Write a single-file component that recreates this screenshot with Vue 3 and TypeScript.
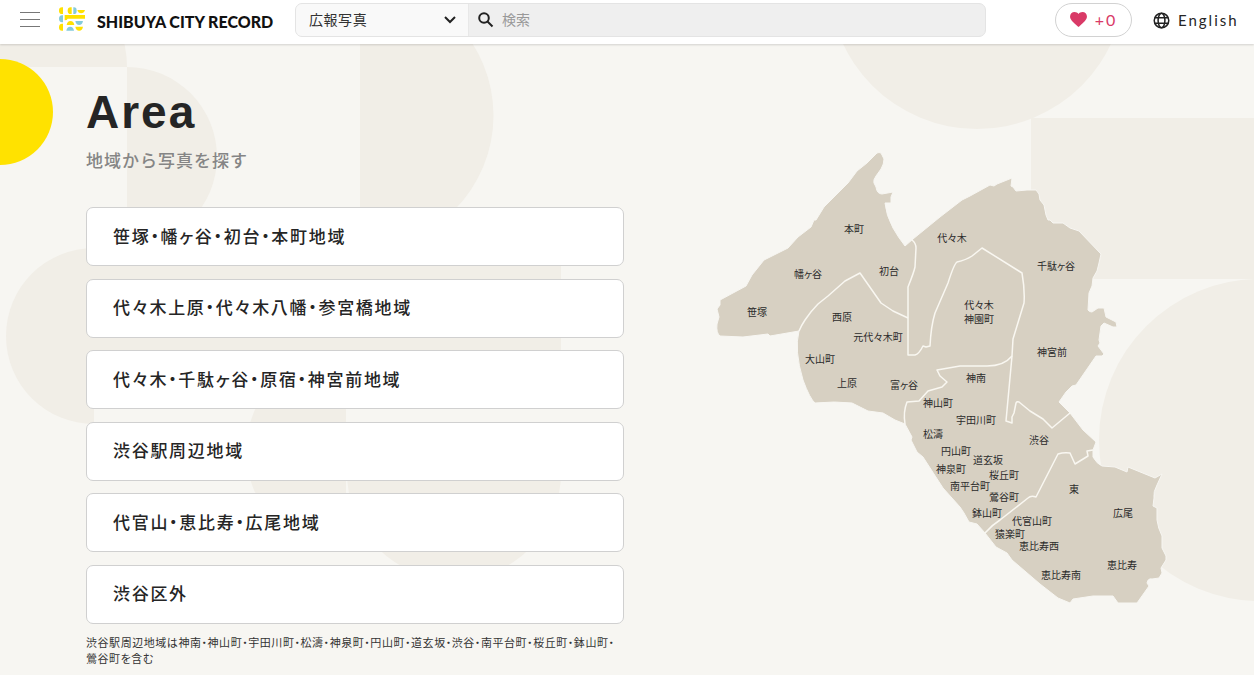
<script setup lang="ts">
import { ref } from 'vue'

interface MapLabel {
  text: string
  x: number
  y: number
}

const category = ref('広報写真')
const keyword = ref('')
const favorites = ref(0)

const areas: string[] = [
  '笹塚・幡ヶ谷・初台・本町地域',
  '代々木上原・代々木八幡・参宮橋地域',
  '代々木・千駄ヶ谷・原宿・神宮前地域',
  '渋谷駅周辺地域',
  '代官山・恵比寿・広尾地域',
  '渋谷区外',
]

const labels: MapLabel[] = [
  { text: '本町', x: 854, y: 229 },
  { text: '代々木', x: 952, y: 238 },
  { text: '千駄ヶ谷', x: 1056, y: 266 },
  { text: '初台', x: 889, y: 271 },
  { text: '幡ヶ谷', x: 808, y: 274 },
  { text: '笹塚', x: 757, y: 312 },
  { text: '西原', x: 842, y: 317 },
  { text: '元代々木町', x: 878, y: 337 },
  { text: '代々木', x: 979, y: 305 },
  { text: '神園町', x: 979, y: 319 },
  { text: '神宮前', x: 1052, y: 352 },
  { text: '大山町', x: 820, y: 359 },
  { text: '上原', x: 847, y: 383 },
  { text: '富ヶ谷', x: 904, y: 385 },
  { text: '神南', x: 976, y: 378 },
  { text: '神山町', x: 938, y: 403 },
  { text: '宇田川町', x: 976, y: 420 },
  { text: '松濤', x: 933, y: 434 },
  { text: '渋谷', x: 1039, y: 440 },
  { text: '円山町', x: 956, y: 451 },
  { text: '道玄坂', x: 988, y: 460 },
  { text: '神泉町', x: 951, y: 469 },
  { text: '桜丘町', x: 1004, y: 475 },
  { text: '南平台町', x: 970, y: 486 },
  { text: '東', x: 1074, y: 489 },
  { text: '鶯谷町', x: 1004, y: 497 },
  { text: '鉢山町', x: 987, y: 513 },
  { text: '広尾', x: 1123, y: 513 },
  { text: '代官山町', x: 1032, y: 521 },
  { text: '猿楽町', x: 1010, y: 534 },
  { text: '恵比寿西', x: 1039, y: 546 },
  { text: '恵比寿', x: 1122, y: 565 },
  { text: '恵比寿南', x: 1061, y: 575 },
]

const outline =
  'M877 153Q879 152 881 153L884 159Q884 164 881 169L876 176Q873 180 874 183L876 187Q877 194 882 194L893 192L891 197V203L885 203Q886 215 893 228Q898 237 905 246L913 239L940 217L962 200L970 196L990 185L994 186L997 184L1012 178L1011 186L1013 187L1016 191L1027 190H1036L1039 194L1040 200L1044 205L1046 215L1048 220H1050L1053 223H1063L1070 228L1079 231L1101 254L1099 263L1097 271L1093 278L1092 286L1089 293L1088 310Q1089 312 1092 312L1098 308L1104 308L1106 317L1116 322L1117 327H1113L1104 323L1101 326L1099 340L1100 343L1098 346L1104 354L1102 356H1096L1076 385L1072 386L1066 392L1059 402L1070 413L1083 430L1096 442L1093 450V457Q1097 464 1102 466L1115 467L1127 472L1128 467L1155 478L1162 474L1157 485Q1153 492 1154 498L1153 506L1157 508V520Q1158 528 1162 536L1162 548L1166 556V560L1161 568L1162 573L1159 578L1152 579Q1148 578 1147 583L1149 586L1137 603H1118L1113 596H1093L1073 599L1070 603L1058 598L1040 584L1012 560L1007 553L996 547L985 533L977 524L969 522L964 513L960 507L943 488L923 457L917 452L911 440L912 437L905 424L895 420L883 413L868 411L852 403Q835 401 815 403Q810 399 803 380Q794 350 799 331L770 336L768 334L743 337L720 336Q716 333 717 324L719 317L717 309L720 305V300L746 286L752 275L764 260L768 258L788 248L798 237L811 227L814 220H816L824 207L848 183L857 171L867 163Z'

const borders: string[] = [
  'M799 331Q801 326 805 320Q811 311 818 304L828 296L845 281L860 273L881 303L893 311L908 318',
  'M912 240Q916 243 916 248L915 267Q914 272 908 287V355H915Q919 354 923 346L926 347L930 346Q931 326 935 313L948 283Q954 264 957 262Q966 260 972 256L982 248L1022 273Q1025 290 1024 303L1013 339L1012 356L1006 421L1012 423L1012 417L1014 413L1016 403Q1017 401 1019 402L1030 411L1043 419L1052 428L1070 413',
  'M1012 356Q1004 366 987 366L960 366L937 370L940 376L947 382L942 387L928 391L919 401L907 402Q903 412 905 424',
  'M985 533Q992 525 1000 520L1028 498Q1031 495 1036 497L1058 454Q1064 452 1070 453L1075 464L1088 456L1087 451L1093 450',
]
</script>

<template>
  <div class="page">
    <header class="header">
      <button class="menu" type="button" aria-label="メニュー">
        <span></span><span></span><span></span>
      </button>

      <a class="brand" href="#">
        <svg class="brand-mark" viewBox="0 0 78 70" aria-hidden="true">
          <g fill="#ffe100">
            <path d="M12 0v20H9A9 10 0 0 1 9 0z" />
            <path d="M38 0v20h-3a9 10 0 0 1 0-20z" />
            <path d="M55 8h23q-3 10-11.500 10T55 8z" />
            <path d="M17 23h61v11H26q-1 5-9 5z" />
            <path d="M12 49v21H9a9 10.500 0 0 1 0-21z" />
            <path d="M23 53q2-12 11.500-12T46 53z" />
            <path d="M49 58h23q-2 12-11.500 12T49 58z" />
          </g>
          <g fill="#84cbdc">
            <path d="M12 24v21H9a9 10.500 0 0 1 0-21z" />
            <path d="M43 0h2a8 10 0 0 1 0 20h-2z" />
            <path d="M49 41h23q-2 12-11.500 12T49 41z" />
            <path d="M22 70q2-12 11.500-12T45 70z" />
          </g>
        </svg>
        <span class="brand-name">SHIBUYA CITY RECORD</span>
      </a>

      <form class="search" role="search" @submit.prevent>
        <div class="category">
          <select v-model="category" aria-label="カテゴリー">
            <option>広報写真</option>
          </select>
          <svg class="chevron" viewBox="0 0 12 8" aria-hidden="true">
            <path d="M1 1l5 5 5-5" />
          </svg>
        </div>
        <label class="keyword">
          <svg viewBox="0 0 16 16" aria-hidden="true">
            <circle cx="6" cy="6" r="4.800" />
            <path d="M9.500 9.500l5 5" />
          </svg>
          <input v-model="keyword" type="search" placeholder="検索" aria-label="検索" />
        </label>
      </form>

      <button class="favorite" type="button" aria-label="お気に入り">
        <svg viewBox="0 0 18 16" aria-hidden="true">
          <path d="M9 16L7.700 14.800C3 10.600 0 8 0 4.700 0 2 2 0 4.800 0 6.400 0 8 .800 9 2 10 .800 11.600 0 13.200 0 16 0 18 2 18 4.700c0 3.300-3 5.900-7.700 10.100z" />
        </svg>
        <span>+{{ favorites }}</span>
      </button>

      <a class="language" href="#">
        <svg viewBox="0 0 18 18" aria-hidden="true">
          <circle cx="9" cy="9" r="7.700" />
          <ellipse cx="9" cy="9" rx="3.600" ry="7.700" />
          <path d="M1.800 6.200h14.400M1.800 11.800h14.400" />
        </svg>
        <span>English</span>
      </a>
    </header>

    <main class="area">
      <svg class="backdrop" viewBox="0 44 1254 631" preserveAspectRatio="xMidYMin slice" aria-hidden="true">
        <g fill="#f1eee7">
          <path d="M-85 67a106 106 0 0 1 212 0z" />
          <path d="M127 67a90 90 0 0 1 0 180z" />
          <path d="M360 -18a133 133 0 0 1 0 267z" />
          <path d="M94 248a88 88 0 0 0 0 176z" />
          <path d="M94 248h467v130H94z" />
          <path d="M346 351a100 100 0 0 0 0 200z" />
          <path d="M347 473a107 107 0 0 0 214 0z" />
          <circle cx="977" cy="-19" r="148" />
          <path d="M1031 118h223v161h-223z" />
          <circle cx="1260" cy="440" r="161" />
        </g>
        <circle cx="0" cy="112" r="53" fill="#ffe200" />
      </svg>

      <section class="list-column">
        <h1>Area</h1>
        <p class="lead">地域から写真を探す</p>
        <ul class="areas">
          <li v-for="area in areas" :key="area">
            <a href="#">{{ area }}</a>
          </li>
        </ul>
        <p class="note">
          渋谷駅周辺地域は神南・神山町・宇田川町・松濤・神泉町・円山町・道玄坂・渋谷・南平台町・桜丘町・鉢山町・鶯谷町を含む
        </p>
      </section>

      <svg class="map" viewBox="716 150 452 456" role="img" aria-label="渋谷区の地図">
        <path class="land" :d="outline" />
        <path v-for="border in borders" :key="border" class="border" :d="border" />
        <text v-for="(label, i) in labels" :key="i" :x="label.x" :y="label.y + 4">{{ label.text }}</text>
      </svg>
    </main>
  </div>
</template>

<style>
body {
  margin: 0;
  background: #f7f6f2;
}
</style>

<style scoped>
.page {
  min-height: 100vh;
  overflow: hidden;
  color: #252525;
  background: #f7f6f2;
  font-family: "Liberation Sans", "Noto Sans CJK JP", sans-serif;
}

.header {
  position: relative;
  z-index: 1;
  display: flex;
  align-items: flex-start;
  box-sizing: border-box;
  height: 44px;
  padding: 3px 14px 0 20px;
  background: #fff;
  box-shadow: 0 1px 2px rgba(0, 0, 0, 0.15);
}

.menu {
  display: flex;
  flex-direction: column;
  justify-content: space-between;
  width: 20px;
  height: 15px;
  margin: 9px 19px 0 0;
  padding: 0;
  border: 0;
  background: none;
}

.menu span {
  height: 1px;
  background: #777;
}

.brand {
  display: flex;
  flex: none;
  align-items: center;
  gap: 12px;
  width: 217px;
  margin: 4px 19px 0 0;
  color: #111;
  text-decoration: none;
}

.brand-mark {
  flex: none;
  width: 26px;
  height: 24px;
}

.brand-name {
  padding-top: 5px;
  font: 900 16px/19px Lato, sans-serif;
  white-space: nowrap;
}

.search {
  display: flex;
  flex: 1;
  box-sizing: border-box;
  height: 34px;
  margin-right: 69px;
  overflow: hidden;
  border: 1px solid #e4e4e4;
  border-radius: 7px;
  background: #efefef;
}

.category {
  position: relative;
  width: 172px;
  border-right: 1px solid #e8e8e8;
  background: #f9f9f9;
}

.category select {
  width: 100%;
  height: 100%;
  padding: 0 32px 2px 13px;
  border: 0;
  appearance: none;
  background: none;
  color: #333;
  font: 14px "Noto Sans CJK JP", sans-serif;
  letter-spacing: 0.04em;
}

.chevron {
  position: absolute;
  top: 12px;
  right: 12px;
  width: 12px;
  height: 8px;
  fill: none;
  stroke: #222;
  stroke-width: 2;
  pointer-events: none;
}

.keyword {
  display: flex;
  flex: 1;
  align-items: center;
  gap: 8px;
  padding-left: 9px;
}

.keyword svg {
  width: 16px;
  height: 16px;
  fill: none;
  stroke: #222;
  stroke-width: 2;
}

.keyword input {
  flex: 1;
  min-width: 0;
  height: 100%;
  padding: 0 0 2px;
  box-sizing: border-box;
  border: 0;
  outline: 0;
  background: none;
  font: 14px "Noto Sans CJK JP", sans-serif;
}

.keyword input::placeholder {
  color: #999;
}

.favorite {
  display: flex;
  flex: none;
  align-items: center;
  justify-content: center;
  gap: 8px;
  box-sizing: border-box;
  width: 77px;
  height: 34px;
  margin-right: 21px;
  padding: 0 0 2px;
  border: 1px solid #d2d2d2;
  border-radius: 17px;
  background: #fff;
  color: #d93a67;
  font: 16px Lato, sans-serif;
  letter-spacing: 2px;
}

.favorite svg {
  width: 17px;
  height: 15px;
  fill: #d93a67;
}

.language {
  display: flex;
  flex: none;
  align-items: center;
  gap: 8px;
  width: 87px;
  height: 34px;
  color: #252525;
  font: 15px Lato, sans-serif;
  letter-spacing: 2px;
  text-decoration: none;
}

.language svg {
  flex: none;
  width: 17px;
  height: 17px;
  fill: none;
  stroke: #222;
  stroke-width: 1.6;
}

.area {
  position: relative;
  display: grid;
  grid-template-columns: 538fr 452fr;
  gap: 92px;
  align-items: start;
  padding: 0 86px 8px;
}

.backdrop {
  position: absolute;
  inset: 0;
  width: 100%;
  height: 100%;
}

.list-column {
  position: relative;
  padding-top: 40px;
}

h1 {
  margin: 0;
  font-size: 46px;
  font-weight: 700;
  line-height: 56px;
  letter-spacing: 2px;
}

.lead {
  margin: 7px 0 35px;
  color: #858585;
  font: 500 17px/25px "Noto Sans CJK JP", sans-serif;
  letter-spacing: 1px;
}

.areas {
  display: grid;
  align-content: space-between;
  min-height: 417px;
  margin: 0;
  padding: 0;
  list-style: none;
}

.areas a {
  display: flex;
  align-items: center;
  box-sizing: border-box;
  min-height: 59px;
  padding: 0 26px 2px;
  border: 1px solid #d0d0d0;
  border-radius: 7px;
  background: #fff;
  color: #252525;
  font: 500 17px/26px "Noto Sans CJK JP", sans-serif;
  font-feature-settings: "palt";
  letter-spacing: 0.1em;
  text-decoration: none;
}

.note {
  margin: 10px 0 0;
  color: #333;
  font: 11px/16px "Noto Sans CJK JP", sans-serif;
  font-feature-settings: "palt";
  letter-spacing: 0.05em;
}

.map {
  position: relative;
  width: 100%;
  margin-top: 106px;
  overflow: visible;
}

.land {
  fill: #d7d0c2;
  stroke: #f7f6f2;
  stroke-width: 1;
  stroke-linejoin: round;
}

.border {
  fill: none;
  stroke: #f9f7f1;
  stroke-width: 1.5;
  stroke-linejoin: round;
}

.map text {
  fill: #2b2b2b;
  font: 10px "Noto Sans CJK JP", sans-serif;
  font-feature-settings: "palt";
  text-anchor: middle;
}
</style>
